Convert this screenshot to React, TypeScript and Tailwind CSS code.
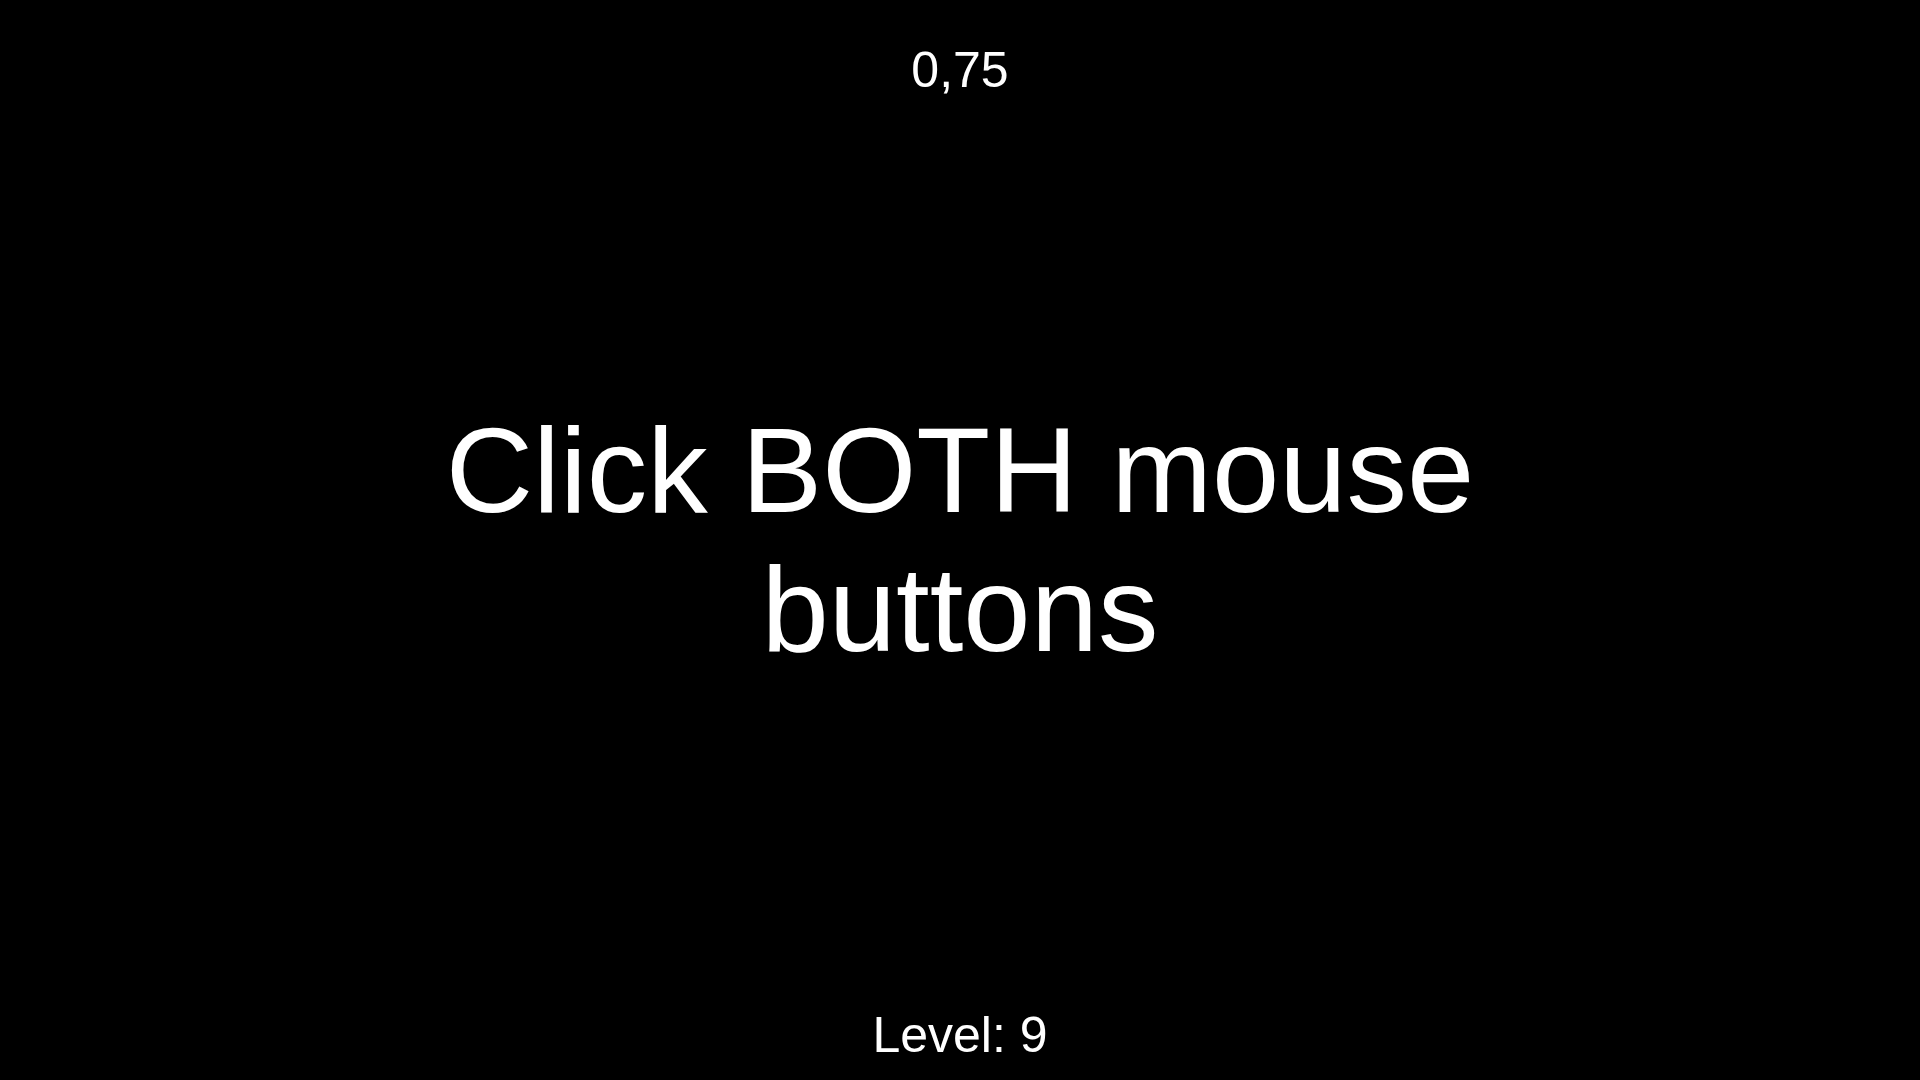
export default function App() {
  return (
    <main
      className="flex h-screen w-full flex-col bg-black text-white"
      style={{ fontFamily: '"Liberation Sans", Arial, sans-serif' }}
    >
      <header className="flex h-[100px] shrink-0 justify-center pt-[42px]">
        <span className="text-[50px] leading-[57px]">0,75</span>
      </header>

      <section className="flex flex-1 items-center justify-center">
        <h1 className="max-w-[1100px] text-center text-[121px] leading-[139px] font-normal">
          Click BOTH mouse buttons
        </h1>
      </section>

      <footer className="flex h-[100px] shrink-0 items-end justify-center pb-[16px]">
        <span className="text-[50px] leading-[57px]">Level: 9</span>
      </footer>
    </main>
  );
}
